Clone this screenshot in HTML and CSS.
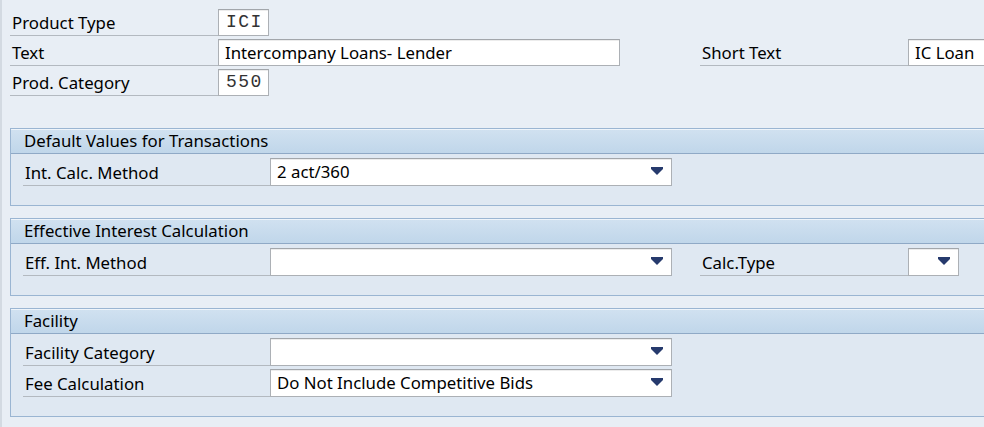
FILE: index.html
```html
<!DOCTYPE html>
<html>
<head>
<meta charset="utf-8">
<link rel="stylesheet" href="styles.css">
</head>
<body>
<div class="screen">
  <div class="head">
    <div class="row">
      <div class="lbl w206">Product Type</div>
      <div class="inp mono w51">ICI</div>
    </div>
    <div class="row">
      <div class="lbl w206">Text</div>
      <div class="inp w402">Intercompany Loans- Lender</div>
      <div class="lbl w208 gapl">Short Text</div>
      <div class="inp w100">IC Loan</div>
    </div>
    <div class="row">
      <div class="lbl w206">Prod. Category</div>
      <div class="inp mono w51">550</div>
    </div>
  </div>

  <div class="group">
    <div class="ghead">Default Values for Transactions</div>
    <div class="gbody">
      <div class="row">
        <div class="lbl w247">Int. Calc. Method</div>
        <div class="inp dd w402"><span>2 act/360</span><i class="arr"></i></div>
      </div>
    </div>
  </div>

  <div class="group">
    <div class="ghead">Effective Interest Calculation</div>
    <div class="gbody">
      <div class="row">
        <div class="lbl w247">Eff. Int. Method</div>
        <div class="inp dd w402"><span></span><i class="arr"></i></div>
        <div class="lbl w208 gap2">Calc.Type</div>
        <div class="inp dd w51"><span></span><i class="arr"></i></div>
      </div>
    </div>
  </div>

  <div class="group">
    <div class="ghead">Facility</div>
    <div class="gbody">
      <div class="row">
        <div class="lbl w247">Facility Category</div>
        <div class="inp dd w402"><span></span><i class="arr"></i></div>
      </div>
      <div class="row">
        <div class="lbl w247">Fee Calculation</div>
        <div class="inp dd w402"><span>Do Not Include Competitive Bids</span><i class="arr"></i></div>
      </div>
    </div>
  </div>
</div>
</body>
</html>
```

FILE: styles.css
```css
html, body {
  margin: 0;
  padding: 0;
  background: #e8eef5;
}
body {
  width: 984px;
  height: 427px;
  overflow: hidden;
  font-family: "Noto Sans", "DejaVu Sans", sans-serif;
  font-size: 16.8px;
  color: #000;
}
.screen {
  height: 427px;
  border-left: 2px solid #d3dae2;
  display: flex;
  flex-direction: column;
  padding-top: 9px;
  box-sizing: border-box;
}
.head {
  padding-left: 8px;
  display: flex;
  flex-direction: column;
  gap: 3px;
}
.row {
  display: flex;
  height: 27px;
  align-items: stretch;
}
.lbl {
  box-sizing: border-box;
  border-bottom: 1px solid #b3b9c0;
  padding-left: 2px;
  padding-top: 1px;
  line-height: 26px;
  white-space: nowrap;
  overflow: hidden;
  flex: none;
}
.w206 { width: 208px; }
.w208 { width: 208px; }
.w247 { width: 247px; }
.gapl { margin-left: 80px; }
.gap2 { margin-left: 28px; }
.inp {
  box-sizing: border-box;
  background: #fff;
  border: 1px solid #acb0b5;
  border-top-color: #a2a6ab;
  box-shadow: inset 0 1px 0 #ececec;
  line-height: 25px;
  padding-left: 6px;
  white-space: nowrap;
  overflow: hidden;
  flex: none;
}
.w51 { width: 51px; }
.w402 { width: 402px; }
.w100 { width: 120px; }
.mono {
  font-family: "Liberation Mono", monospace;
  font-size: 18px;
  letter-spacing: 1.5px;
  color: #333;
  padding-left: 7px;
}
.dd {
  display: flex;
  align-items: center;
  justify-content: space-between;
  padding-right: 8px;
}
.arr {
  display: block;
  width: 12px;
  height: 8px;
  background: #263a6d;
  clip-path: polygon(0 0, 100% 0, 100% 25%, 50% 100%, 0 25%);
  margin-top: -2px;
}
.group {
  margin-left: 8px;
  width: 990px;
  border: 1px solid #9ab5d2;
  background: #dfe8f2;
  margin-top: 12px;
  box-sizing: border-box;
  flex: none;
}
.head + .group { margin-top: 32px; }
.ghead {
  line-height: 22px;
  padding-left: 13px;
  background: linear-gradient(#d0e1f0, #c0d6ea);
  border-top: 1px solid #eef4fa;
  border-bottom: 1px solid #8fa9c6;
  box-sizing: border-box;
  height: 25px;
}
.gbody {
  padding: 4px 0 19px 12px;
  display: flex;
  flex-direction: column;
  gap: 3px;
}
.gbody .row { height: 28px; }
.gbody .lbl { line-height: 27px; }
.gbody .inp { line-height: 26px; }
```
